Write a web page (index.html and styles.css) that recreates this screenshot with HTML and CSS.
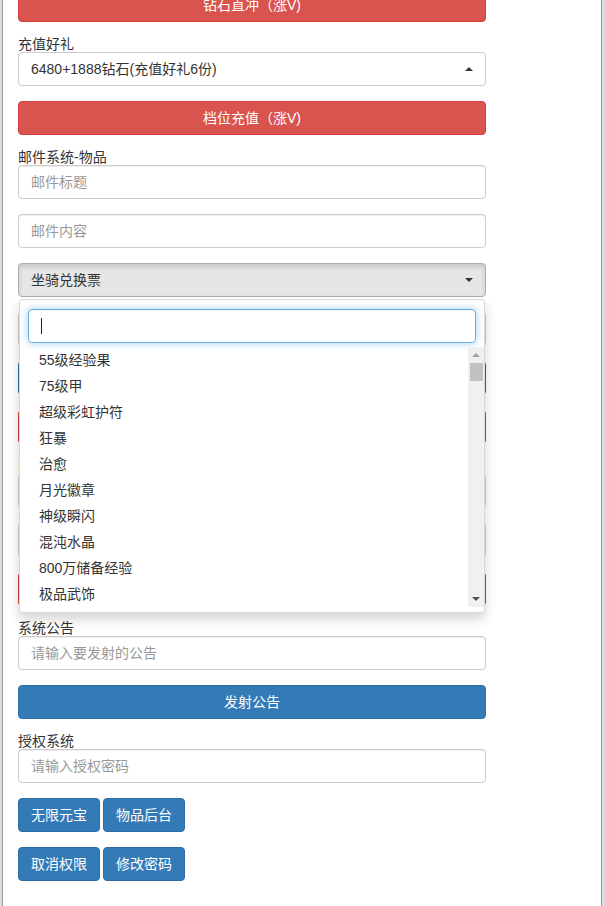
FILE: index.html
```html
<!DOCTYPE html>
<html lang="zh-CN">
<head>
<meta charset="utf-8">
<title>后台</title>
<link rel="stylesheet" href="styles.css">
</head>
<body>
<div class="page">
  <div class="form">
    <button class="btn btn-danger">钻石直冲（涨V)</button>

    <label class="label">充值好礼</label>
    <button class="picker"><span class="picker-text">6480+1888钻石(充值好礼6份)</span><span class="caret caret-up"></span></button>

    <button class="btn btn-danger">档位充值（涨V)</button>

    <label class="label">邮件系统-物品</label>
    <input class="input" type="text" placeholder="邮件标题">
    <input class="input" type="text" placeholder="邮件内容">

    <div class="picker-wrap">
      <button class="picker picker-active"><span class="picker-text">坐骑兑换票</span><span class="caret"></span></button>
      <div class="menu">
        <div class="searchbox">
          <div class="search-input"><span class="text-caret"></span></div>
        </div>
        <div class="list-wrap">
          <ul class="list">
            <li>55级经验果</li>
            <li>75级甲</li>
            <li>超级彩虹护符</li>
            <li>狂暴</li>
            <li>治愈</li>
            <li>月光徽章</li>
            <li>神级瞬闪</li>
            <li>混沌水晶</li>
            <li>800万储备经验</li>
            <li>极品武饰</li>
            <li>坐骑兑换票</li>
            <li>神兽之魂</li>
          </ul>
          <div class="sb">
            <div class="sb-btn"><span class="sb-up"></span></div>
            <div class="sb-thumb"></div>
            <div class="sb-space"></div>
            <div class="sb-btn"><span class="sb-down"></span></div>
          </div>
        </div>
      </div>
    </div>

    <input class="input" type="text" placeholder="物品数量">
    <button class="btn btn-primary">发送物品</button>
    <button class="btn btn-danger">全服发送</button>

    <label class="label">邮件系统-元宝</label>
    <input class="input" type="text" placeholder="邮件标题">
    <input class="input" type="text" placeholder="元宝数量">
    <button class="btn btn-danger">发送元宝</button>

    <label class="label">系统公告</label>
    <input class="input" type="text" placeholder="请输入要发射的公告">
    <button class="btn btn-primary">发射公告</button>

    <label class="label">授权系统</label>
    <input class="input" type="text" placeholder="请输入授权密码">
    <div class="btn-row">
      <button class="btn btn-primary btn-inline">无限元宝</button>
      <button class="btn btn-primary btn-inline">物品后台</button>
    </div>
    <div class="btn-row">
      <button class="btn btn-primary btn-inline">取消权限</button>
      <button class="btn btn-primary btn-inline">修改密码</button>
    </div>
  </div>
</div>
</body>
</html>
```

FILE: styles.css
```css
* {
  box-sizing: border-box;
}

html, body {
  margin: 0;
  padding: 0;
  height: 100%;
  overflow: hidden;
}

body {
  background: #dcdcdc;
  font-family: "Liberation Sans", "Noto Sans CJK SC", sans-serif;
  font-size: 14px;
  line-height: 20px;
  color: #333;
}

.page {
  margin: 0 3px 0 2px;
  background: #fff;
  border-left: 1px solid #9a9a9a;
  border-right: 1px solid #9a9a9a;
  min-height: 960px;
  padding: 0 15px;
}

.form {
  width: 468px;
  display: flex;
  flex-direction: column;
  margin-top: -12px;
}

.form > * {
  margin-bottom: 15px;
}

.form > .label {
  margin-bottom: 0;
}

.label {
  display: block;
  height: 15px;
  line-height: 14px;
  padding-bottom: 1px;
  font-size: 14px;
  color: #333;
}

.btn {
  display: block;
  width: 100%;
  height: 34px;
  padding: 6px 12px;
  font-family: inherit;
  font-size: 14px;
  line-height: 20px;
  text-align: center;
  color: #fff;
  border: 1px solid transparent;
  border-radius: 4px;
  cursor: pointer;
}

.btn-danger {
  background: #d9534f;
  border-color: #d43f3a;
}

.btn-primary {
  background: #337ab7;
  border-color: #2e6da4;
}

.btn-row {
  display: flex;
  gap: 3px;
}

.btn-inline {
  width: auto;
  padding: 6px 12px;
}

.input {
  display: block;
  width: 100%;
  height: 34px;
  padding: 6px 12px;
  font-family: inherit;
  font-size: 14px;
  line-height: 20px;
  color: #555;
  background: #fff;
  border: 1px solid #ccc;
  border-radius: 4px;
  box-shadow: inset 0 1px 1px rgba(0, 0, 0, .075);
  outline: none;
}

.input::placeholder {
  color: #999;
}

.picker {
  display: flex;
  align-items: center;
  justify-content: space-between;
  width: 100%;
  height: 34px;
  padding: 6px 12px;
  font-family: inherit;
  font-size: 14px;
  line-height: 20px;
  color: #333;
  background: #fff;
  border: 1px solid #ccc;
  border-radius: 4px;
  text-align: left;
}

.picker-active {
  background: #e6e6e6;
  border-color: #adadad;
  box-shadow: inset 0 3px 5px rgba(0, 0, 0, .125);
}

.caret {
  width: 0;
  height: 0;
  border-left: 4px solid transparent;
  border-right: 4px solid transparent;
  border-top: 4px solid #333;
}

.caret-up {
  border-top: 0;
  border-bottom: 4px solid #333;
}

.picker-wrap {
  position: relative;
}

.menu {
  position: absolute;
  top: 100%;
  left: 1px;
  right: 1px;
  margin-top: 2px;
  padding: 5px 0;
  background: #fff;
  border: 1px solid rgba(0, 0, 0, .15);
  border-radius: 4px;
  box-shadow: 0 6px 12px rgba(0, 0, 0, .175);
  z-index: 10;
}

.searchbox {
  padding: 4px 8px;
}

.search-input {
  height: 34px;
  padding: 8px 12px;
  border: 1px solid #66afe9;
  border-radius: 4px;
  box-shadow: inset 0 1px 1px rgba(0, 0, 0, .075), 0 0 8px rgba(102, 175, 233, .6);
  display: flex;
  align-items: center;
}

.text-caret {
  display: block;
  width: 1px;
  height: 16px;
  background: #222;
}

.list-wrap {
  display: flex;
  height: 260px;
}

.list {
  flex: 1;
  margin: 0;
  padding: 0;
  list-style: none;
  overflow: hidden;
}

.list li {
  height: 26px;
  padding: 3px 20px 3px 19px;
  line-height: 20px;
  color: #333;
  white-space: nowrap;
}

.sb {
  width: 16px;
  background: #f0f0f0;
  display: flex;
  flex-direction: column;
}

.sb-btn {
  height: 16px;
  display: flex;
  align-items: center;
  justify-content: center;
}

.sb-up {
  width: 0;
  height: 0;
  border-left: 4px solid transparent;
  border-right: 4px solid transparent;
  border-bottom: 4px solid #a3a3a3;
}

.sb-down {
  width: 0;
  height: 0;
  border-left: 4px solid transparent;
  border-right: 4px solid transparent;
  border-top: 4px solid #505050;
}

.sb-thumb {
  height: 18px;
  margin: 0 1px 0 2px;
  background: #c1c1c1;
}

.sb-space {
  flex: 1;
}
```
